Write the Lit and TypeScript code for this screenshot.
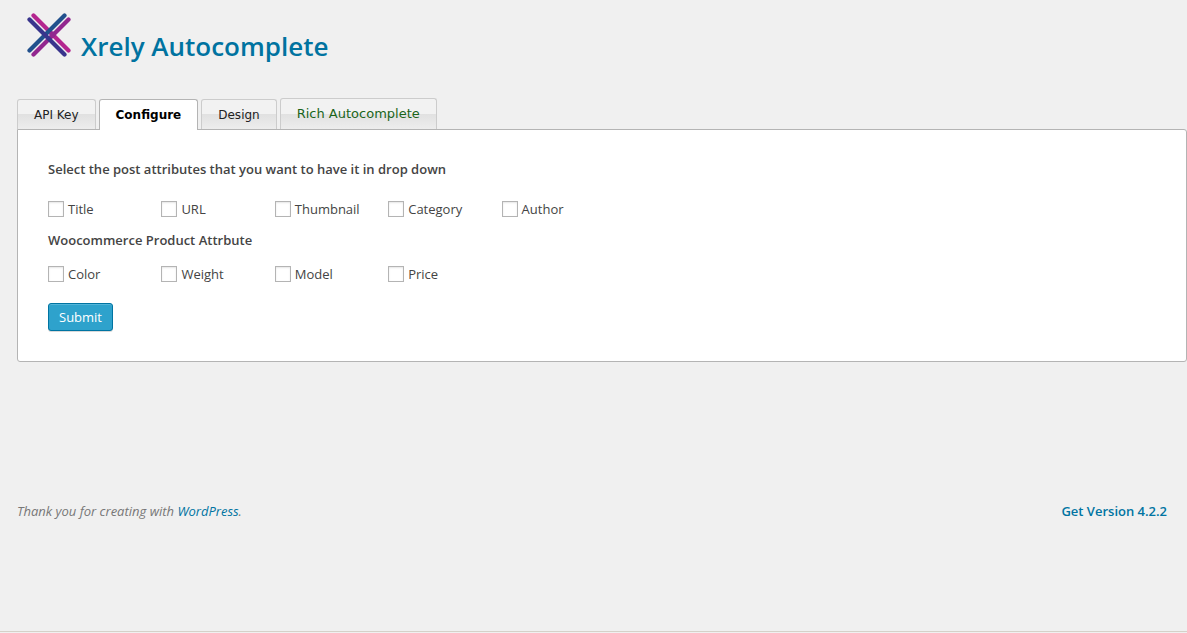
import { LitElement, html, css } from "lit";
import { customElement, property, state } from "lit/decorators.js";
import { classMap } from "lit/directives/class-map.js";

@customElement("xrely-logo")
class XrelyLogo extends LitElement {
  static styles = css`
    :host { display: block; }
    svg { display: block; }
  `;

  render() {
    return html`
      <svg width="44" height="44" viewBox="0 0 44 44" fill="none" stroke-width="4.2" stroke-linecap="round" aria-hidden="true">
        <path d="M6.5 2.5 41.5 37.5" stroke="#b4258f" />
        <path d="M41.5 6.5 6.5 41.5" stroke="#92278f" />
        <path d="M37.5 2.5 2.5 37.5" stroke="#21508c" />
        <path d="M2.5 6.5 37.5 41.5" stroke="#38348c" />
        <circle cx="25.5" cy="21.5" r="3" fill="#92278f" />
      </svg>
    `;
  }
}

@customElement("attribute-list")
class AttributeList extends LitElement {
  static styles = css`
    :host { display: block; }
    .list {
      display: grid;
      grid-template-columns: repeat(5, 1fr);
      max-width: 567px;
    }
    .item {
      display: flex;
      align-items: center;
      gap: 4px;
      line-height: 20px;
    }
    .box {
      appearance: none;
      box-sizing: border-box;
      flex: none;
      width: 16px;
      height: 16px;
      margin: 0;
      border: 1px solid #b4b4b4;
      background: #fff;
      box-shadow: inset 0 1px 2px rgba(0, 0, 0, 0.1);
    }
    .box:checked { background: #1e8cbe; }
  `;

  @property({ attribute: false }) names: string[] = [];

  render() {
    return html`
      <div class="list">
        ${this.names.map(
          (name) => html`<label class="item"><input class="box" type="checkbox" name=${name} />${name}</label>`
        )}
      </div>
    `;
  }
}

@customElement("app-root")
class AppRoot extends LitElement {
  static styles = css`
    :host {
      display: block;
      box-sizing: border-box;
      min-height: 100vh;
      background: #f0f0f0;
      color: #444;
      font: 13px/20px "Open Sans", sans-serif;
    }
    .page {
      display: flex;
      flex-direction: column;
      box-sizing: border-box;
      min-height: calc(100vh - 1px);
      padding-left: 17px;
      border-bottom: 1px solid #d5d1c8;
    }
    .header {
      display: flex;
      align-items: flex-start;
      gap: 10px;
      padding: 13px 0 0 10px;
    }
    .title {
      margin: 15px 0 0;
      color: #0073a0;
      font-size: 26px;
      line-height: 36px;
      font-weight: 600;
    }
    .tabs {
      display: flex;
      align-items: flex-end;
      gap: 3px;
      margin-top: 34px;
    }
    .tab {
      box-sizing: border-box;
      height: 30px;
      padding: 0 16px;
      border: 1px solid #ccc;
      border-bottom: 0;
      border-radius: 3px 3px 0 0;
      background: linear-gradient(#f2f2f2 50%, #e1e1e1 50%, #ededed);
      color: #222;
      font: 12px/30px "DejaVu Sans", sans-serif;
      cursor: pointer;
    }
    .rich {
      height: 31px;
      color: #1a651a;
      font-size: 13px;
    }
    .active {
      margin-bottom: -1px;
      height: 31px;
      border-color: #b4b4b4;
      background: #fff;
      color: #000;
      font-weight: 700;
      z-index: 1;
    }
    .panel {
      padding: 29px 30px 30px;
      border: 1px solid #b4b4b4;
      border-radius: 0 3px 3px 3px;
      background: #fff;
    }
    .heading {
      margin: 0;
      font-size: 13px;
      line-height: 20px;
      font-weight: 600;
    }
    .first { margin: 20px 0 11px; }
    .second { margin: 14px 0 19px; }
    .submit {
      display: block;
      box-sizing: border-box;
      height: 28px;
      padding: 0 10px;
      border: 1px solid #0074a2;
      border-radius: 3px;
      background: #2ea2cc;
      box-shadow: inset 0 1px 0 rgba(120, 200, 230, 0.5), 0 1px 0 rgba(0, 0, 0, 0.15);
      color: #fff;
      font: 13px/26px "Open Sans", sans-serif;
      cursor: pointer;
    }
    .footer {
      display: flex;
      justify-content: space-between;
      margin-top: 139px;
      padding-right: 20px;
    }
    .thanks { color: #777; font-style: italic; }
    .link { color: #0074a2; text-decoration: none; }
    .version { font-weight: 600; }
  `;

  @state() private current = "Configure";

  private tabs = ["API Key", "Configure", "Design", "Rich Autocomplete"];
  private postAttributes = ["Title", "URL", "Thumbnail", "Category", "Author"];
  private productAttributes = ["Color", "Weight", "Model", "Price"];

  render() {
    return html`
      <div class="page">
        <header class="header">
          <xrely-logo></xrely-logo>
          <h1 class="title">Xrely Autocomplete</h1>
        </header>
        <nav class="tabs" role="tablist">
          ${this.tabs.map(
            (tab) => html`
              <button
                type="button"
                role="tab"
                aria-selected=${tab === this.current}
                class=${classMap({ tab: true, active: tab === this.current, rich: tab === "Rich Autocomplete" })}
                @click=${() => (this.current = tab)}
              >${tab}</button>
            `
          )}
        </nav>
        <form class="panel" @submit=${(e: Event) => e.preventDefault()}>
          <h2 class="heading">Select the post attributes that you want to have it in drop down</h2>
          <attribute-list class="first" .names=${this.postAttributes}></attribute-list>
          <h2 class="heading">Woocommerce Product Attrbute</h2>
          <attribute-list class="second" .names=${this.productAttributes}></attribute-list>
          <button class="submit" type="submit">Submit</button>
        </form>
        <footer class="footer">
          <span class="thanks">Thank you for creating with <a class="link" href="#">WordPress</a>.</span>
          <a class="link version" href="#">Get Version 4.2.2</a>
        </footer>
      </div>
    `;
  }
}
